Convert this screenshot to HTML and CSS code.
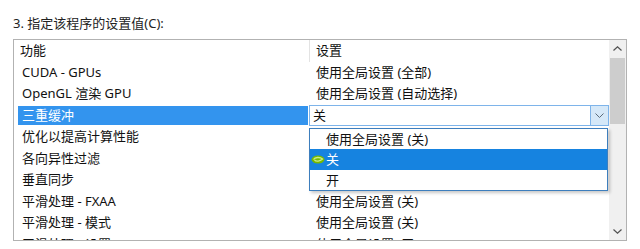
FILE: index.html
```html
<!DOCTYPE html>
<html lang="zh-CN">
<head>
<meta charset="utf-8">
<title>设置值</title>
<link rel="stylesheet" href="styles.css">
</head>
<body>
<div class="title">3. 指定该程序的设置值(C):</div>
<div class="box">
  <div class="list">
    <div class="row header">
      <div class="c1">功能</div>
      <div class="c2">设置</div>
    </div>
    <div class="row">
      <div class="c1">CUDA - GPUs</div>
      <div class="c2">使用全局设置 (全部)</div>
    </div>
    <div class="row">
      <div class="c1">OpenGL 渲染 GPU</div>
      <div class="c2">使用全局设置 (自动选择)</div>
    </div>
    <div class="row selected">
      <div class="c1"><span class="hl">三重缓冲</span></div>
      <div class="c2 combo-cell">
        <div class="combo">
          <span class="combo-text">关</span>
          <span class="combo-btn">
            <svg width="9" height="5" viewBox="0 0 9 5"><path d="M0.5 0.5 L4.5 4.5 L8.5 0.5" fill="none" stroke="#5a6b7a" stroke-width="1"/></svg>
          </span>
        </div>
        <div class="dropdown">
          <div class="opt">使用全局设置 (关)</div>
          <div class="opt active">
            <svg class="nv" width="14" height="9" viewBox="0 0 14 9"><ellipse cx="7" cy="4.5" rx="6.5" ry="4" fill="#76b900"/><path d="M2.5 4.5 C4 2 9 1.8 11.5 4 C9 6.5 5 6.8 3.5 5" fill="none" stroke="#c9ec8a" stroke-width="1.3"/></svg>
            <span>关</span>
          </div>
          <div class="opt">开</div>
        </div>
      </div>
    </div>
    <div class="row">
      <div class="c1">优化以提高计算性能</div>
      <div class="c2">使用全局设置 (关)</div>
    </div>
    <div class="row">
      <div class="c1">各向异性过滤</div>
      <div class="c2">使用全局设置 (关)</div>
    </div>
    <div class="row">
      <div class="c1">垂直同步</div>
      <div class="c2">使用全局设置 (关)</div>
    </div>
    <div class="row">
      <div class="c1">平滑处理 - FXAA</div>
      <div class="c2">使用全局设置 (关)</div>
    </div>
    <div class="row">
      <div class="c1">平滑处理 - 模式</div>
      <div class="c2">使用全局设置 (关)</div>
    </div>
    <div class="row">
      <div class="c1">平滑处理 - 设置</div>
      <div class="c2">使用全局设置 (无)</div>
    </div>
  </div>
  <div class="scrollbar">
    <div class="arrow">
      <svg width="9" height="5" viewBox="0 0 9 5"><path d="M0.5 4.5 L4.5 0.8 L8.5 4.5" fill="none" stroke="#505050" stroke-width="1.2"/></svg>
    </div>
    <div class="track">
      <div class="thumb"></div>
    </div>
    <div class="arrow">
      <svg width="9" height="5" viewBox="0 0 9 5"><path d="M0.5 0.5 L4.5 4.2 L8.5 0.5" fill="none" stroke="#505050" stroke-width="1.2"/></svg>
    </div>
  </div>
</div>
</body>
</html>
```
FILE: styles.css
```css
html, body {
  margin: 0;
  padding: 0;
  background: #ffffff;
}

body {
  font-family: "Noto Sans", "Noto Sans CJK SC", sans-serif;
  font-size: 13px;
  color: #111111;
  width: 640px;
  height: 249px;
  overflow: hidden;
}

.title {
  padding: 13px 0 0 13px;
  height: 20px;
  line-height: 20px;
  color: #222222;
  margin-bottom: 6px;
}

.box {
  margin-left: 13px;
  width: 614px;
  height: 202px;
  box-sizing: border-box;
  border: 1px solid #b2b2b2;
  display: flex;
  overflow: hidden;
}

.list {
  width: 595px;
  flex: none;
}

.row {
  display: grid;
  grid-template-columns: 295px 300px;
  height: 21.5px;
  line-height: 21.5px;
  white-space: nowrap;
}

.c1 {
  padding-left: 8px;
  overflow: hidden;
}

.c2 {
  padding-left: 7px;
}

.header .c1 {
  padding-left: 6px;
}

.header .c2 {
  border-left: 1px solid #e3e3e3;
  padding-left: 6px;
}

.selected .c1 {
  padding: 1px 1px 1px 4px;
}

.hl {
  display: block;
  height: 19.5px;
  line-height: 19.5px;
  background: #3394ee;
  color: #ffffff;
  padding-left: 4px;
}

.combo-cell {
  position: relative;
  padding: 0;
}

.combo {
  display: flex;
  height: 21.5px;
  box-sizing: border-box;
  border: 1px solid #7eb4ea;
  background: #ffffff;
}

.combo-text {
  flex: 1;
  padding-left: 3px;
  line-height: 19.5px;
}

.combo-btn {
  width: 17px;
  background: #d5e8f8;
  border-left: 1px solid #7eb4ea;
  display: flex;
  align-items: center;
  justify-content: center;
}

.dropdown {
  position: absolute;
  left: 0;
  right: 1px;
  top: 23px;
  background: #ffffff;
  border: 1px solid #3d7ebd;
  box-shadow: 2px 2px 3px rgba(0, 0, 0, 0.22);
  z-index: 2;
}

.opt {
  height: 20.5px;
  line-height: 20.5px;
  padding-left: 16px;
  display: flex;
  align-items: center;
}

.opt.active {
  background: #1683e0;
  color: #ffffff;
  padding-left: 1px;
}

.nv {
  margin-right: 1px;
}

.scrollbar {
  width: 17px;
  flex: none;
  background: #f0f0f0;
  display: flex;
  flex-direction: column;
}

.arrow {
  height: 17px;
  display: flex;
  align-items: center;
  justify-content: center;
  flex: none;
}

.track {
  flex: 1;
  padding: 1px 1px 0 1px;
}

.thumb {
  height: 66px;
  background: #cdcdcd;
}
```
